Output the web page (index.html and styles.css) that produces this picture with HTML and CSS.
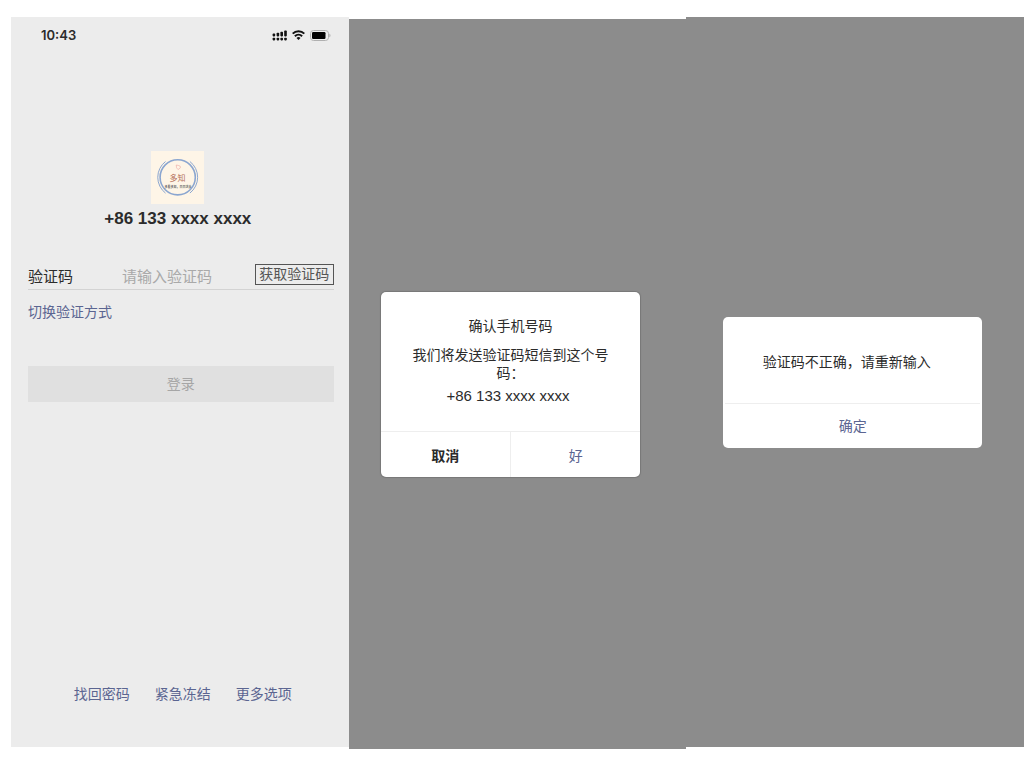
FILE: index.html
```
<!DOCTYPE html>
<html lang="zh-CN">
<head>
  <meta charset="UTF-8" />
  <meta name="viewport" content="width=device-width, initial-scale=1.0" />
  <title>验证码登录</title>
  <link rel="stylesheet" href="styles.css">
</head>
<body>
  <main class="screens">
    <section class="screen login">
      <div class="status-bar">
        <span class="time">10:43</span>
        <div class="status-icons">
          <svg width="15" height="11" viewBox="0 0 15 11" fill="#111">
            <rect x="0.6" y="3.6" width="2.6" height="2.8" rx="0.8"/>
            <rect x="4.6" y="2.8" width="2.6" height="3.6" rx="0.8"/>
            <rect x="8.4" y="1.8" width="2.6" height="4.6" rx="0.8"/>
            <rect x="12.2" y="0.4" width="2.6" height="6" rx="0.8"/>
            <rect x="0.6" y="7.8" width="2.6" height="2.6" rx="0.8"/>
            <rect x="4.6" y="7.8" width="2.6" height="2.6" rx="0.8"/>
            <rect x="8.4" y="7.8" width="2.6" height="2.6" rx="0.8"/>
            <rect x="12.2" y="7.8" width="2.6" height="2.6" rx="0.8"/>
          </svg>
          <svg width="13" height="10" viewBox="0 0 13 10" fill="none" stroke="#111" stroke-width="2">
            <path d="M0.7 3.6a8.2 8.2 0 0 1 11.6 0"/>
            <path d="M2.9 6.3a5.1 5.1 0 0 1 7.2 0"/>
            <path d="M6.5 10L4.5 8a2.8 2.8 0 0 1 4 0z" fill="#111" stroke="none"/>
          </svg>
          <svg width="21" height="11" viewBox="0 0 21 11">
            <rect x="0.5" y="0.5" width="18" height="10" rx="3" fill="none" stroke="#b0b0b0"/>
            <rect x="2" y="2" width="13.5" height="7" rx="1.2" fill="#000"/>
            <path d="M19.3 3.5c1.6 0.6 1.6 3.4 0 4z" fill="#b0b0b0"/>
          </svg>
        </div>
      </div>

      <header class="account">
        <svg class="logo" viewBox="0 0 53 53">
          <rect width="53" height="53" fill="#fef5e7"/>
          <g fill="none" stroke="#8ba6d0">
            <circle cx="26.7" cy="26.3" r="17.6" stroke-width="1.6"/>
            <path d="M14.5 10.5a20 20 0 0 0 0 31.6M38.9 10.5a20 20 0 0 1 0 31.6" stroke-width="1"/>
          </g>
          <path d="M25.2 14l2 0.4 2 0.8 0.2 1.6-2.4 1.8-1.4-1.8z" fill="none" stroke="#eca4a0" stroke-width="0.6"/>
          <text class="logo-name" x="26.5" y="29.5">多知</text>
          <text class="logo-motto" x="27" y="36.5">多看多知，日日进步</text>
        </svg>
        <h1>+86 133 xxxx xxxx</h1>
      </header>

      <form>
        <div class="code-row">
          <label for="code">验证码</label>
          <input id="code" type="text" placeholder="请输入验证码">
          <button class="get-code" type="button">获取验证码</button>
        </div>
        <a class="switch" href="#">切换验证方式</a>
        <button class="submit" type="submit">登录</button>
      </form>

      <nav class="links">
        <a href="#">找回密码</a>
        <a href="#">紧急冻结</a>
        <a href="#">更多选项</a>
      </nav>
    </section>

    <section class="screen overlay confirm">
      <div class="dialog" role="dialog" aria-labelledby="confirm-title">
        <div class="dialog-body">
          <h2 id="confirm-title">确认手机号码</h2>
          <p>我们将发送验证码短信到这个号码：</p>
          <p class="phone">+86 133 xxxx xxxx</p>
        </div>
        <div class="actions">
          <button class="cancel" type="button">取消</button>
          <button type="button">好</button>
        </div>
      </div>
    </section>

    <section class="screen overlay error">
      <div class="dialog" role="alertdialog" aria-labelledby="error-text">
        <div class="dialog-body">
          <p id="error-text">验证码不正确，请重新输入</p>
        </div>
        <div class="actions">
          <button type="button">确定</button>
        </div>
      </div>
    </section>
  </main>
</body>
</html>
```
FILE: styles.css
```
* {
  box-sizing: border-box;
}

body {
  margin: 0;
  background-color: #fff;
  color: #2b2b2b;
  font-family: "Liberation Sans", "Noto Sans CJK SC", sans-serif;
  font-size: 14px;
  line-height: 20px;
}

h1, h2, p {
  margin: 0;
}

a {
  color: #5b6591;
  text-decoration: none;
}

button {
  border: none;
  padding: 0;
  background: none;
  color: #5b6591;
  font: inherit;
  cursor: pointer;
}

.screens {
  display: grid;
  grid-template-columns: repeat(3, minmax(0, 1fr));
  min-height: 100vh;
  padding: 17px 11px 20px;
}

.screen {
  display: flex;
  flex-direction: column;
}

/* login */
.login {
  background-color: #ececec;
  padding: 0 15px 43px 17px;
}

.status-bar {
  display: flex;
  align-items: center;
  justify-content: space-between;
  height: 36px;
  padding: 0 3px 0 13px;
}

.time {
  font-family: Inter, sans-serif;
  font-size: 13px;
  font-weight: 600;
}

.status-icons {
  display: flex;
  align-items: center;
  gap: 5px;
}

.account {
  display: flex;
  flex-direction: column;
  align-items: center;
  margin-top: 98px;
  padding-right: 6px;
}

.logo {
  width: 53px;
  height: 53px;
}

.logo-name,
.logo-motto {
  font-family: "Noto Sans CJK SC", sans-serif;
  text-anchor: middle;
}

.logo-name {
  fill: #b5715c;
  font-size: 8px;
}

.logo-motto {
  fill: #666;
  font-size: 3px;
  font-weight: 700;
}

.account h1 {
  font-size: 17px;
  line-height: 30px;
}

form {
  display: flex;
  flex-direction: column;
  margin-top: 30px;
}

.code-row {
  display: flex;
  border-bottom: 1px solid #d3d3d3;
  height: 26px;
  font-size: 15px;
  line-height: 26px;
}

.code-row label {
  width: 94px;
}

.code-row input {
  flex: 1;
  min-width: 0;
  border: none;
  padding: 0;
  background: none;
  font: inherit;
  outline: none;
}

.code-row input::placeholder {
  color: #a9a9a9;
}

.get-code {
  width: 79px;
  height: 21px;
  border: 1px solid #555;
  color: #555;
  font-size: 14px;
  line-height: 19px;
}

.switch {
  align-self: flex-start;
  margin-top: 12px;
}

.submit {
  height: 36px;
  margin-top: 44px;
  background-color: #e0e0e0;
  color: #a6a6a6;
}

.links {
  display: flex;
  justify-content: center;
  gap: 25px;
  margin-top: auto;
  padding-left: 4px;
}

/* dialogs */
.overlay {
  justify-content: center;
  align-items: center;
  background-color: #8c8c8c;
}

.confirm {
  margin: 2px 0 -2px;
  padding: 0 46px 0 32px;
}

.error {
  padding: 0 42px 0 37px;
}

.dialog {
  width: 100%;
  border-radius: 5px;
  background-color: #fff;
  text-align: center;
  line-height: 18px;
}

.confirm .dialog {
  box-shadow: 0 0 1px 1px #777;
}

.confirm .dialog-body {
  padding: 25px 26px 23px;
}

.dialog h2 {
  margin-bottom: 11px;
  font-size: 14px;
  font-weight: 400;
}

.dialog .phone {
  margin-top: 2px;
  padding-right: 5px;
  font-size: 15px;
  line-height: 24px;
}

.actions {
  display: flex;
  border-top: 1px solid #eee;
}

.actions button {
  flex: 1;
  height: 45px;
  padding-top: 4px;
}

.actions button + button {
  border-left: 1px solid #eee;
}

.actions .cancel {
  color: #2b2b2b;
  font-weight: 700;
}

.error .dialog-body {
  padding: 36px 20px 32px 8px;
}

.error .actions {
  margin: 0 2px;
}

.error .actions button {
  height: 44px;
  padding: 0;
}
```
